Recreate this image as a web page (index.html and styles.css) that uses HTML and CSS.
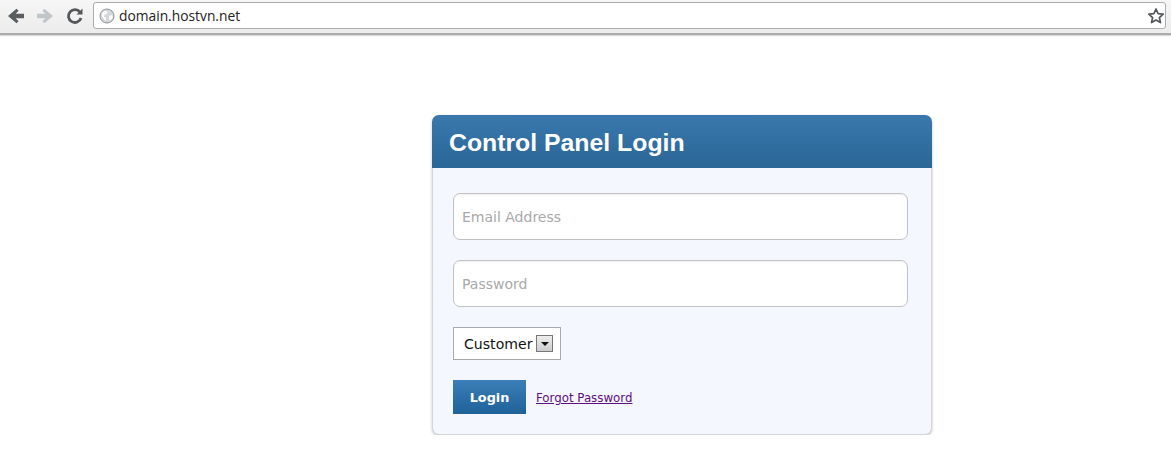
FILE: index.html
```html
<!DOCTYPE html>
<html lang="en">
<head>
    <meta charset="UTF-8">
    <meta name="viewport" content="width=device-width, initial-scale=1.0">
    <title>Control Panel Login</title>
    <link rel="stylesheet" href="styles.css">
</head>
<body>

<!-- browser toolbar -->
<div class="toolbar">
    <svg class="nav-icon back" width="18" height="18" viewBox="0 0 18 18">
        <path d="M17 6.800H8.600l3-3-2.100-2.100L1 9l8.500 7.300 2.100-2.100-3-3H17z" fill="#5a5d60"/>
    </svg>
    <svg class="nav-icon forward" width="18" height="18" viewBox="0 0 18 18">
        <path d="M1 6.800h8.400l-3-3 2.100-2.100L17 9l-8.500 7.300-2.100-2.100 3-3H1z" fill="#c3c6c9"/>
    </svg>
    <svg class="nav-icon reload" width="18" height="18" viewBox="0 0 18 18">
        <path d="M14 5.200A6.400 6.400 0 1 0 15 11" fill="none" stroke="#55585b" stroke-width="2.800"/>
        <path d="M10.500 7.600h6v-6z" fill="#55585b"/>
    </svg>
    <div class="address">
        <svg class="globe" width="16" height="16" viewBox="0 0 16 16">
            <circle cx="8" cy="8" r="7" fill="#d5d8da" stroke="#8d9296" stroke-width="1"/>
            <path d="M4 3.500l3-1 1.500 1.500-1 2-2 .5-.5 2 2 1.500v3L5 11 2.500 7.500zM10 8l3-1 .8 2-2.300 3.500-1.500-1z" fill="#fff"/>
        </svg>
        <span class="url">domain.hostvn.net</span>
        <svg class="star" width="18" height="18" viewBox="0 0 18 18">
            <path d="M9 2l2.100 4.700 5.100.5-3.800 3.400 1.100 5L9 13l-4.500 2.600 1.100-5-3.800-3.400 5.100-.5z" fill="#fff" stroke="#55585b" stroke-width="1.700" stroke-linejoin="round"/>
        </svg>
    </div>
</div>

<div class="page">
    <div class="login-box">
        <h1 class="login-title">Control Panel Login</h1>
        <form class="login-form">
            <input class="field" type="text" placeholder="Email Address">
            <input class="field" type="password" placeholder="Password">
            <div class="role-select">
                <span>Customer</span>
                <span class="role-arrow"></span>
            </div>
            <div class="actions">
                <button type="button" class="login-button">Login</button>
                <a class="forgot" href="#">Forgot Password</a>
            </div>
        </form>
    </div>
</div>

</body>
</html>
```

FILE: styles.css
```css
body {
    margin: 0;
    background-color: #fff;
    font-family: "DejaVu Sans", Verdana, sans-serif;
    overflow: hidden;
}
.toolbar {
    display: flex;
    align-items: center;
    height: 35px;
    padding: 0 5px 2px 7px;
    box-sizing: border-box;
    background: linear-gradient(to bottom, #f6f6f6, #ececec);
    border-bottom: 2px solid #a9abad;
    box-shadow: 0 1px 1px #d8d8d8;
}
.nav-icon {
    flex: none;
    margin-right: 11px;
}
.nav-icon.reload {
    margin-left: 1px;
    margin-right: 9px;
}
.address {
    flex: 1;
    display: flex;
    align-items: center;
    height: 27px;
    padding: 0 0 0 5px;
    box-sizing: border-box;
    background-color: #fff;
    border: 1px solid #a9adb0;
    border-radius: 3px;
}
.globe {
    flex: none;
    margin-right: 4px;
}
.url {
    flex: 1;
    font-family: "Open Sans", sans-serif;
    font-size: 13.8px;
    color: #222;
}
.star {
    flex: none;
    margin-left: 1px;
}
.page {
    display: flex;
    padding: 80px 0 0 432px;
}
.login-box {
    width: 500px;
    height: 320px;
    box-sizing: border-box;
    background-color: #f5f7fe;
    border: 1px solid #d3d5da;
    border-top: none;
    border-radius: 7px;
    box-shadow: 0 1px 3px #c4c4c4;
}
.login-title {
    margin: 0 -1px;
    height: 53px;
    padding-left: 17px;
    font-family: "Liberation Sans", Arial, sans-serif;
    font-size: 24.8px;
    font-weight: bold;
    line-height: 55px;
    color: #fff;
    background: linear-gradient(to bottom, #3a77ac, #2a6797);
    border-radius: 7px 7px 0 0;
}
.login-form {
    display: flex;
    flex-direction: column;
    align-items: flex-start;
    padding: 25px 0 0 20px;
}
.field {
    width: 455px;
    height: 47px;
    margin-bottom: 20px;
    padding: 0 8px;
    box-sizing: border-box;
    font-family: "DejaVu Sans", Verdana, sans-serif;
    font-size: 14px;
    background-color: #fff;
    border: 1px solid #c0c2c5;
    border-radius: 7px;
    box-shadow: inset 0 1px 2px #eee;
}
.field::placeholder {
    color: #a9a9a9;
    opacity: 1;
}
.role-select {
    display: flex;
    align-items: center;
    width: 108px;
    height: 33px;
    padding-left: 10px;
    box-sizing: border-box;
    font-size: 14.1px;
    color: #111;
    background-color: #fff;
    border: 1px solid #a9a9ae;
}
.role-arrow {
    position: relative;
    width: 17px;
    height: 17px;
    margin-left: 4px;
    box-sizing: border-box;
    background: linear-gradient(to bottom, #eee, #ccc);
    border: 1px solid #777;
}
.role-arrow::after {
    content: "";
    position: absolute;
    left: 4px;
    top: 6px;
    border-left: 4px solid transparent;
    border-right: 4px solid transparent;
    border-top: 4px solid #111;
}
.actions {
    display: flex;
    align-items: center;
    margin-top: 20px;
}
.login-button {
    width: 73px;
    height: 34px;
    padding: 0;
    font-family: "DejaVu Sans", Verdana, sans-serif;
    font-size: 12.8px;
    font-weight: bold;
    color: #fff;
    background: linear-gradient(to bottom, #3b7fb8, #1f6199);
    border: none;
    cursor: pointer;
}
.forgot {
    position: relative;
    top: 1px;
    margin-left: 10px;
    font-size: 11.8px;
    color: #5f0f80;
}
```
